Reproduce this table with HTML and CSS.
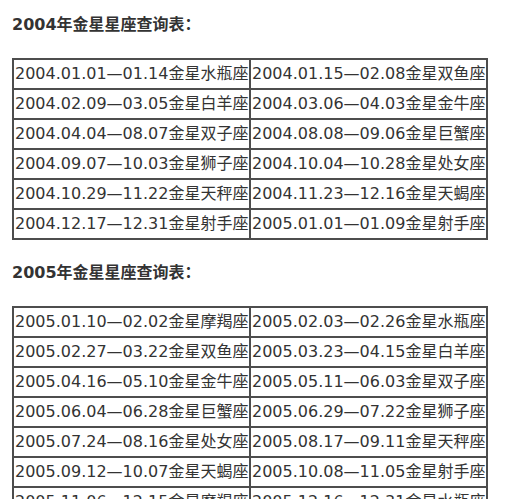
FILE: index.html
```html
<!DOCTYPE html>
<html lang="zh-CN">
<head>
<meta charset="utf-8">
<title>金星星座查询表</title>
<link rel="stylesheet" href="styles.css">
</head>
<body>
<div class="page">
  <p class="title">2004年金星星座查询表：</p>
  <table class="venus">
    <tr><td>2004.01.01—01.14金星水瓶座</td><td>2004.01.15—02.08金星双鱼座</td></tr>
    <tr><td>2004.02.09—03.05金星白羊座</td><td>2004.03.06—04.03金星金牛座</td></tr>
    <tr><td>2004.04.04—08.07金星双子座</td><td>2004.08.08—09.06金星巨蟹座</td></tr>
    <tr><td>2004.09.07—10.03金星狮子座</td><td>2004.10.04—10.28金星处女座</td></tr>
    <tr><td>2004.10.29—11.22金星天秤座</td><td>2004.11.23—12.16金星天蝎座</td></tr>
    <tr><td>2004.12.17—12.31金星射手座</td><td>2005.01.01—01.09金星射手座</td></tr>
  </table>
  <p class="title">2005年金星星座查询表：</p>
  <table class="venus">
    <tr><td>2005.01.10—02.02金星摩羯座</td><td>2005.02.03—02.26金星水瓶座</td></tr>
    <tr><td>2005.02.27—03.22金星双鱼座</td><td>2005.03.23—04.15金星白羊座</td></tr>
    <tr><td>2005.04.16—05.10金星金牛座</td><td>2005.05.11—06.03金星双子座</td></tr>
    <tr><td>2005.06.04—06.28金星巨蟹座</td><td>2005.06.29—07.22金星狮子座</td></tr>
    <tr><td>2005.07.24—08.16金星处女座</td><td>2005.08.17—09.11金星天秤座</td></tr>
    <tr><td>2005.09.12—10.07金星天蝎座</td><td>2005.10.08—11.05金星射手座</td></tr>
    <tr><td>2005.11.06—12.15金星摩羯座</td><td>2005.12.16—12.31金星水瓶座</td></tr>
  </table>
</div>
</body>
</html>
```
FILE: styles.css
```css
html, body {
  margin: 0;
  padding: 0;
  background: #ffffff;
}
.page {
  padding: 13px 12px 0 12px;
  font-family: "DejaVu Sans", "Noto Sans CJK SC", sans-serif;
  color: #333333;
}
.title {
  margin: 0 0 21px 0;
  font-size: 16px;
  line-height: 24px;
  font-weight: bold;
  color: #333333;
}
.venus + .title {
  margin-top: 21px;
}
.venus {
  border-collapse: collapse;
  width: 476px;
  font-size: 16px;
}
.venus td {
  width: 50%;
  border: 2px solid #4d4d4d;
  padding: 0 0 0 1px;
  line-height: 28px;
  white-space: nowrap;
  text-align: left;
}
```
